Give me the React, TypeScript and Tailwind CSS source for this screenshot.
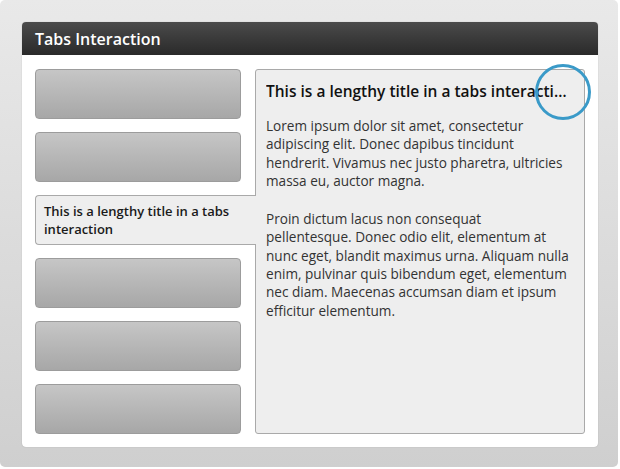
import React from 'react';

const font = { fontFamily: '"Open Sans", "Liberation Sans", sans-serif' };

const Tab: React.FC<{ active?: boolean; label?: string }> = ({ active, label }) => {
  if (active) {
    return (
      <div className="relative z-10 w-[221px] h-[50px] bg-[#eeeeee] border-t border-l border-b border-[#a9a9a9] rounded-l-[4px] pl-[8px] pr-[12px] pt-[6px] text-[13px] leading-[18px] font-semibold text-[#1a1a1a]">
        {label}
      </div>
    );
  }
  return (
    <div className="h-[50px] rounded-[4px] border border-[#9c9c9c] bg-gradient-to-b from-[#c6c6c6] to-[#a7a7a7]" />
  );
};

export default function App() {
  return (
    <div className="w-[620px] h-[469px] bg-white" style={font}>
      <div className="w-[618px] h-[467px] rounded-[5px] bg-gradient-to-b from-[#e9e9e9] to-[#cfcfcf] pt-[22px] pl-[22px] pr-[20px] pb-[20px]">
        <div className="w-[576px] h-full flex flex-col rounded-[4px] bg-white overflow-hidden shadow-[0_0_1px_rgba(0,0,0,0.3)]">
          {/* header */}
          <div className="h-[33px] shrink-0 bg-gradient-to-b from-[#4b4b4b] to-[#2a2a2a] pl-[13px] flex items-center">
            <span className="text-white text-[16px] font-semibold">Tabs Interaction</span>
          </div>

          {/* body */}
          <div className="flex-1 flex gap-[14px] pt-[14px] pl-[13px] pb-[13px]">
            <div className="w-[206px] shrink-0 flex flex-col gap-[13px]">
              <Tab />
              <Tab />
              <Tab active label="This is a lengthy title in a tabs interaction" />
              <Tab />
              <Tab />
              <Tab />
            </div>

            <div className="relative w-[330px] shrink-0 bg-[#eeeeee] border border-[#a9a9a9] rounded-[3px] pl-[10px] pr-[15px] pt-[10px]">
              <div className="text-[15.5px] leading-[22px] font-semibold text-[#111111] truncate">
                This is a lengthy title in a tabs interaction
              </div>
              <div className="mt-[15px] text-[13.6px] leading-[18.3px] text-[#333333]">
                <p>
                  Lorem ipsum dolor sit amet, consectetur adipiscing elit. Donec dapibus tincidunt hendrerit.
                  Vivamus nec justo pharetra, ultricies massa eu, auctor magna.
                </p>
                <p className="mt-[20px]">
                  Proin dictum lacus non consequat pellentesque. Donec odio elit, elementum at nunc eget,
                  blandit maximus urna. Aliquam nulla enim, pulvinar quis bibendum eget, elementum nec diam.
                  Maecenas accumsan diam et ipsum efficitur elementum.
                </p>
              </div>

              {/* focus ring */}
              <div className="absolute left-[279px] top-[-6px] w-[56px] h-[56px] rounded-full border-[3px] border-[#3a9ac8]" />
            </div>
          </div>
        </div>
      </div>
    </div>
  );
}
